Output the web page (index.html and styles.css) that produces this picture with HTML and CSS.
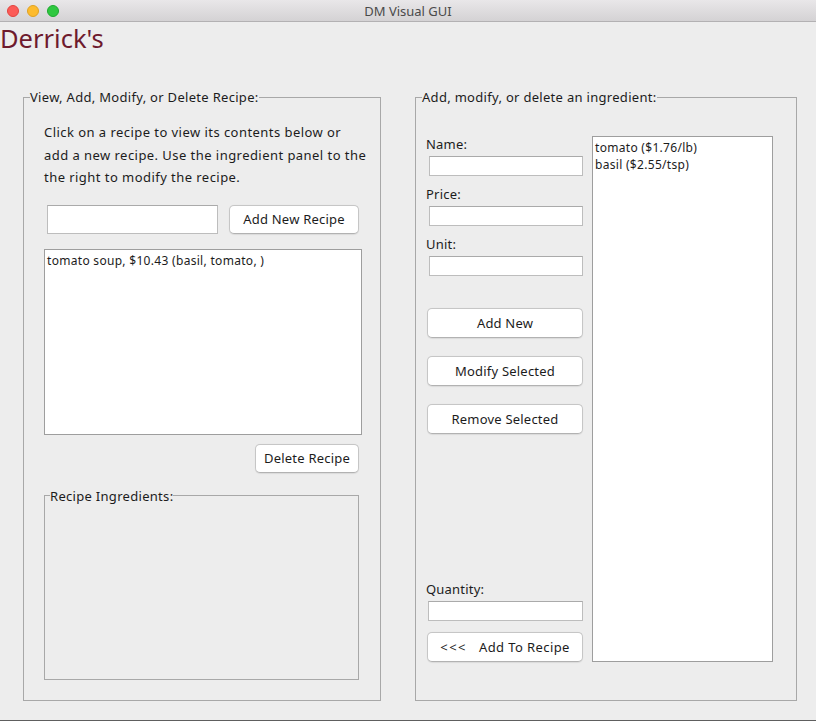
FILE: index.html
```html
<!DOCTYPE html>
<html>
<head>
<meta charset="utf-8">
<title>DM Visual GUI</title>
<link rel="stylesheet" href="styles.css">
</head>
<body>
<div class="window">
  <div class="titlebar">
    <div class="lights">
      <span class="light red"></span>
      <span class="light yellow"></span>
      <span class="light green"></span>
    </div>
    <div class="wintitle">DM Visual GUI</div>
    <div></div>
  </div>
  <div class="content">
    <h1 class="brand">Derrick's</h1>
    <div class="panels">
      <fieldset class="panel recipe-panel">
        <legend class="ptitle">View, Add, Modify, or Delete Recipe:</legend>
        <p class="intro">Click on a recipe to view its contents below or add a new recipe. Use the ingredient panel to the the right to modify the recipe.</p>
        <div class="add-row">
          <input class="field recipe-name" type="text">
          <button class="btn add-recipe">Add New Recipe</button>
        </div>
        <div class="list recipe-list">
          <div class="item">tomato soup, $10.43 (basil, tomato, )</div>
        </div>
        <div class="del-row">
          <button class="btn del-recipe">Delete Recipe</button>
        </div>
        <fieldset class="sub">
          <legend class="ptitle">Recipe Ingredients:</legend>
        </fieldset>
      </fieldset>

      <fieldset class="panel ing-panel">
        <legend class="ptitle">Add, modify, or delete an ingredient:</legend>
        <div class="ing-body">
          <div class="ing-form">
            <label class="lbl">Name:</label>
            <input class="field small" type="text">
            <label class="lbl">Price:</label>
            <input class="field small" type="text">
            <label class="lbl">Unit:</label>
            <input class="field small" type="text">
            <div class="actions">
              <button class="btn wide">Add New</button>
              <button class="btn wide">Modify Selected</button>
              <button class="btn wide">Remove Selected</button>
            </div>
            <div class="qty">
              <label class="lbl">Quantity:</label>
              <input class="field small" type="text">
              <button class="btn wide to-recipe"><span class="arrows">&lt;&lt;&lt;</span>Add To Recipe</button>
            </div>
          </div>
          <div class="list ing-list">
            <div class="item">tomato ($1.76/lb)</div>
            <div class="item">basil ($2.55/tsp)</div>
          </div>
        </div>
      </fieldset>
    </div>
  </div>
</div>
</body>
</html>
```

FILE: styles.css
```css
* { box-sizing: border-box; }
html, body { margin: 0; padding: 0; }
body {
  background: #5e5e5e;
  font-family: "Noto Sans", "DejaVu Sans", sans-serif;
  font-size: 13px;
  color: #1c1c1c;
}
.window {
  width: 816px;
  height: 720px;
  background: #ededed;
  overflow: hidden;
}
.titlebar {
  height: 22px;
  display: grid;
  grid-template-columns: 1fr auto 1fr;
  align-items: center;
  background: linear-gradient(#e9e7e9, #d4d2d4);
  border-bottom: 1px solid #b3b1b3;
}
.lights {
  display: flex;
  gap: 8px;
  padding-left: 7px;
}
.light {
  width: 12px;
  height: 12px;
  border-radius: 50%;
}
.red { background: #fc5b57; border: 1px solid #e2443f; }
.yellow { background: #fdbb2d; border: 1px solid #e0a222; }
.green { background: #2fc840; border: 1px solid #1ea92f; }
.wintitle {
  font-size: 13px;
  color: #4a4a4a;
  line-height: 16px;
}
.content { padding: 0; }
.brand {
  margin: 2px 0 0 0;
  font-weight: normal;
  font-size: 25.5px;
  line-height: 28px;
  color: #6e1a2d;
}
.panels {
  display: flex;
  align-items: flex-start;
  gap: 34px;
  margin-top: 37px;
  padding-left: 23px;
}
fieldset {
  margin: 0;
  padding: 0;
  border: 1px solid #a8a8a8;
  min-width: 0;
}
.ptitle {
  padding: 0;
  margin-left: 6px;
  line-height: 16px;
  font-size: 13px;
  letter-spacing: 0.3px;
  color: #1c1c1c;
}
.panel {
  height: 612px;
  display: flex;
  flex-direction: column;
}
.recipe-panel { width: 358px; }
.ing-panel { width: 382px; }
.intro {
  margin: 16px 0 0 0;
  padding-left: 20px;
  padding-right: 12.5px;
  line-height: 22.5px;
  letter-spacing: 0.45px;
}
.add-row {
  display: flex;
  gap: 11px;
  margin-top: 16px;
  padding-left: 23px;
}
.field {
  display: block;
  background: #fff;
  border: 1px solid #bdbdbd;
  border-top-color: #aaaaaa;
  border-radius: 0;
  padding: 0 3px;
  margin: 0;
  font: inherit;
  outline: none;
}
.recipe-name { width: 171px; height: 29px; }
.btn {
  display: block;
  font: inherit;
  font-size: 13px;
  letter-spacing: 0.2px;
  color: #1c1c1c;
  background: #fff;
  border: 1px solid #c6c6c6;
  border-bottom-color: #b2b2b2;
  border-radius: 5px;
  box-shadow: 0 0.5px 1px rgba(0,0,0,0.08);
  padding: 0;
  margin: 0;
}
.add-recipe { width: 130px; height: 29px; }
.list {
  background: #fff;
  border: 1px solid #9e9e9e;
}
.item {
  line-height: 17px;
  padding-left: 2px;
  font-size: 12px;
  letter-spacing: 0.3px;
}
.recipe-list {
  margin: 15px 0 0 20px;
  width: 318px;
  height: 186px;
  padding-top: 2px;
}
.del-row {
  display: flex;
  justify-content: flex-end;
  padding-right: 21px;
  margin-top: 9px;
}
.del-recipe { width: 104px; height: 29px; }
.sub {
  margin: 15px 0 20px 20px;
  width: 315px;
  flex: 1;
}
.sub .ptitle { margin-left: 5px; }

.ing-body {
  flex: 1;
  display: grid;
  grid-template-columns: 156px 181px;
  column-gap: 9px;
  padding: 31px 0 38px 11px;
}
.ing-form {
  display: flex;
  flex-direction: column;
}
.lbl {
  display: block;
  line-height: 16px;
  margin-left: -1px;
  letter-spacing: 0.2px;
}
.small { width: 154px; height: 20px; margin-top: 4px; margin-left: 2px; margin-bottom: 10px; }
.actions {
  display: flex;
  flex-direction: column;
  gap: 18px;
  margin-top: 22px;
}
.wide { width: 156px; height: 30px; }
.qty {
  margin-top: auto;
}
.qty .small { margin-left: 1px; width: 155px; margin-bottom: 11px; }
.to-recipe { height: 30px; letter-spacing: 0.4px; }
.arrows { margin-right: 12px; letter-spacing: 1.5px; }
.ing-list {
  height: 100%;
  padding-top: 2px;
}
```
